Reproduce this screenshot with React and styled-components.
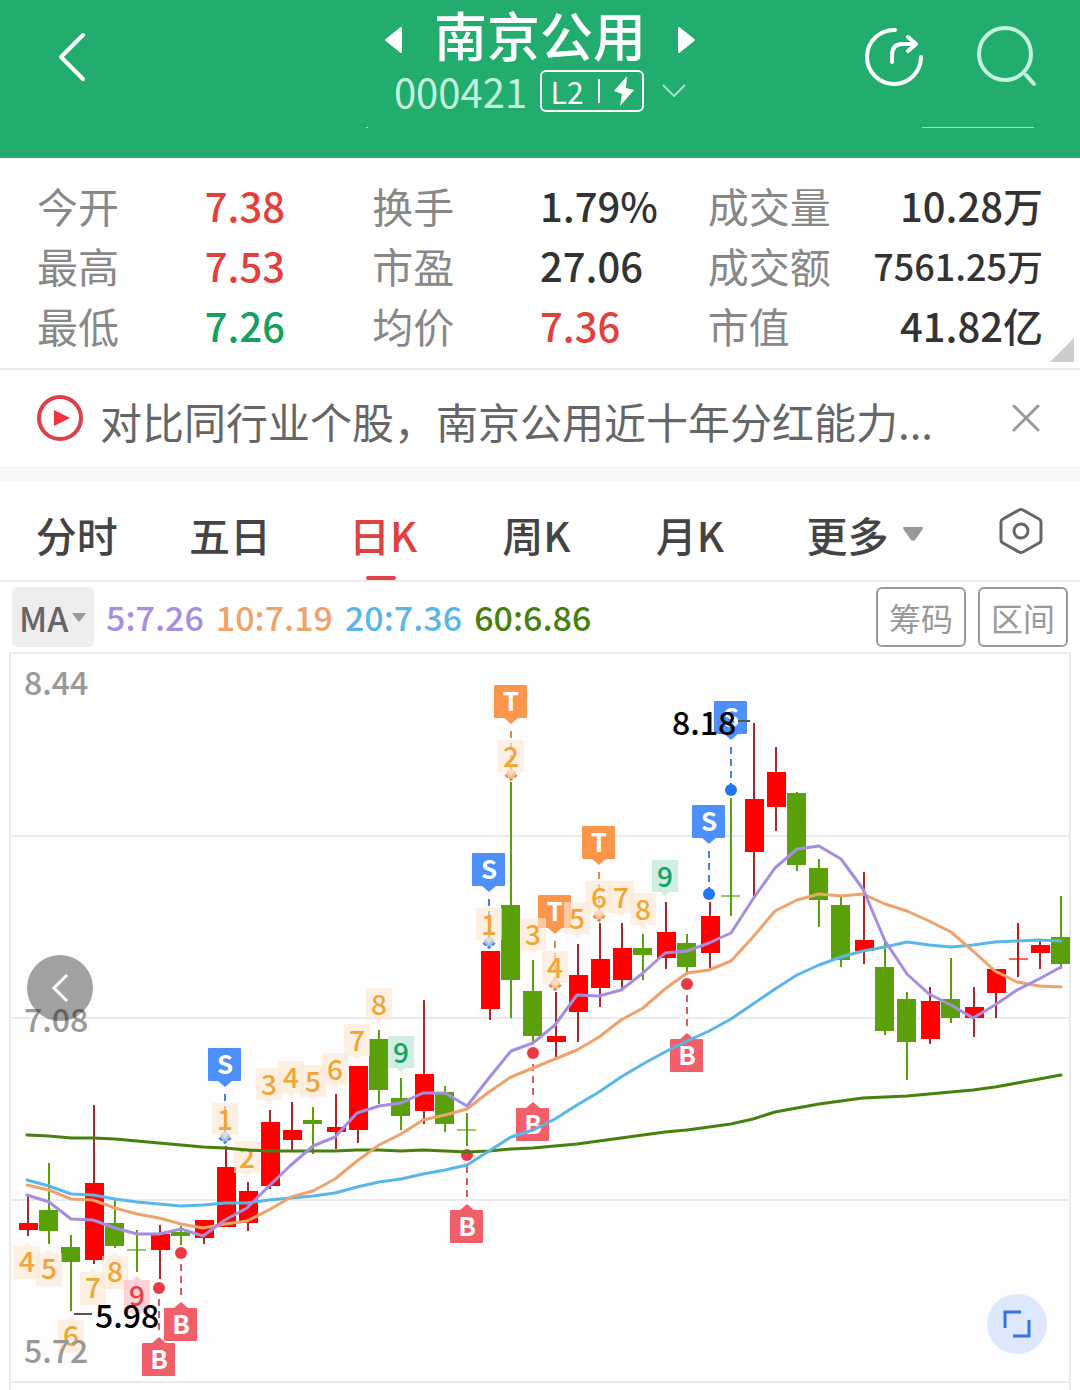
import React, { useState } from "react";
import styled, { createGlobalStyle } from "styled-components";

const FONT = '"Noto Sans CJK SC", "Noto Sans", sans-serif';

const GlobalStyle = createGlobalStyle`
  * { box-sizing: border-box; }
  body { margin: 0; background: #fff; font-family: ${FONT}; color: #333; }
  button, select { font-family: inherit; margin: 0; }
  svg { display: block; }
`;

const PlainButton = styled.button`
  display: flex;
  align-items: center;
  justify-content: center;
  padding: 0;
  border: 0;
  background: none;
  color: inherit;
  cursor: pointer;
`;

/* ---------- header ---------- */

const Header = styled.header`
  background: #22ac6e;
  color: #fff;
  padding-bottom: 30px;
`;

const HeaderBar = styled.div`
  display: grid;
  grid-template-columns: 1fr auto 1fr;
  padding: 4px 42px 0 56px;
`;

const HeaderSide = styled.div`
  display: flex;
  align-items: flex-start;
  justify-content: ${(p) => (p.$end ? "flex-end" : "flex-start")};
  gap: 52px;
  padding-top: 22px;
`;

const HeaderCenter = styled.div`
  display: flex;
  flex-direction: column;
  align-items: center;
  gap: 6px;
  margin-right: 14px;
`;

const TitleRow = styled.div`
  display: flex;
  align-items: center;
  gap: 31px;
  padding-top: 12px;
  height: 60px;
`;

const Title = styled.h1`
  margin: -12px 0 0;
  font-size: 53px;
  line-height: 60px;
  font-weight: 500;
  white-space: nowrap;
`;

const CodeRow = styled.div`
  display: flex;
  align-items: center;
  height: 42px;
`;

const Code = styled.span`
  margin-right: 13px;
  font-size: 40px;
  line-height: 42px;
  color: #c3f3dc;
`;

const LevelBadge = styled(PlainButton)`
  width: 104px;
  height: 42px;
  margin-right: 18px;
  border: 2px solid #fff;
  border-radius: 6px;
  font-size: 30px;
  line-height: 36px;
  gap: 14px;
`;

const LevelDivider = styled.span`
  width: 2px;
  height: 24px;
  background: #fff;
`;

const HeaderEdge = styled.div`
  display: flex;
  justify-content: space-between;
  height: 1px;
  margin-top: 15px;
  padding: 0 46px 0 366px;
`;

const EdgeMark = styled.span`
  width: ${(p) => p.$width}px;
  background: #8fe3bd;
`;

/* ---------- quote figures ---------- */

const Quote = styled.section`
  position: relative;
  padding: 17px 37px 13px;
  border-bottom: 2px solid #ebebeb;
`;

const QuoteGrid = styled.dl`
  display: grid;
  grid-template-columns: repeat(3, 1fr);
  margin: 0;
`;

const Figure = styled.div`
  display: grid;
  grid-template-columns: ${(p) => (p.$end ? "auto 1fr" : "1fr 1fr")};
  text-align: ${(p) => (p.$end ? "right" : "left")};
  align-items: center;
  height: 60px;
  white-space: nowrap;
`;

const FigureName = styled.dt`
  font-size: 41px;
  line-height: 60px;
  color: #888;
`;

const FigureValue = styled.dd`
  margin: 0;
  font-size: ${(p) => (p.$small ? 36 : 40)}px;
  line-height: 60px;
  font-weight: 500;
  color: ${(p) => ({ up: "#e2403c", down: "#14a05f" })[p.$tone] || "#333"};
`;

const Corner = styled.svg`
  position: absolute;
  right: 6px;
  bottom: 6px;
`;

/* ---------- news strip ---------- */

const News = styled.section`
  display: flex;
  align-items: center;
  height: 111px;
  padding: 0 40px 0 36px;
  border-bottom: 15px solid #f7f7f7;
`;

const NewsLink = styled.a`
  flex: 1;
  min-width: 0;
  margin: 6px 40px 0 16px;
  overflow: hidden;
  font-size: 42px;
  line-height: 60px;
  color: #666;
  text-decoration: none;
  white-space: nowrap;
`;

/* ---------- period tabs ---------- */

const Tabs = styled.nav`
  display: grid;
  grid-template-columns: repeat(5, 153fr) 196fr 117fr;
  height: 101px;
  border-bottom: 2px solid #ebebeb;
`;

const Tab = styled(PlainButton)`
  position: relative;
  gap: 14px;
  padding-top: 6px;
  font-size: 41px;
  line-height: 60px;
  font-weight: 500;
  color: ${(p) => (p.$active ? "#e2403f" : "#444")};

  &::after {
    content: "";
    display: ${(p) => (p.$active ? "block" : "none")};
    position: absolute;
    bottom: 0;
    left: calc(50% - 17px);
    width: 30px;
    height: 4px;
    border-radius: 2px;
    background: #e2404a;
  }
`;

/* ---------- indicator bar ---------- */

const IndicatorBar = styled.div`
  display: flex;
  align-items: center;
  gap: 12px;
  height: 70px;
  padding: 0 12px;
`;

const SelectBox = styled.label`
  display: grid;
  align-items: center;
  width: 82px;
  height: 60px;
  border-radius: 5px;
  background: #eee;

  > * { grid-area: 1 / 1; }
  > svg { justify-self: end; margin-right: 8px; pointer-events: none; }
`;

const Select = styled.select`
  width: 100%;
  height: 60px;
  padding: 0 0 0 7px;
  border: 0;
  background: none;
  appearance: none;
  font-size: 34px;
  font-weight: 500;
  color: #666;
`;

const MaValue = styled.span`
  font-size: 34px;
  line-height: 60px;
  font-weight: 500;
  color: ${(p) => p.$color};
  white-space: nowrap;
`;

const Tools = styled.div`
  display: flex;
  gap: 12px;
  margin-left: auto;
`;

const ToolButton = styled(PlainButton)`
  width: 90px;
  height: 60px;
  border: 2px solid #999;
  border-radius: 6px;
  font-size: 32px;
  color: #999;
`;

/* ---------- chart ---------- */

const ChartArea = styled.section`
  position: relative;
`;

const ChartSvg = styled.svg`
  width: 100%;
  height: auto;
  font-family: ${FONT};
  font-weight: 500;
`;

const ScrollButton = styled(PlainButton)`
  position: absolute;
  left: 27px;
  top: 303px;
  width: 66px;
  height: 66px;
  border-radius: 50%;
  background: rgba(0, 0, 0, 0.36);
`;

const ExpandButton = styled(PlainButton)`
  position: absolute;
  right: 33px;
  bottom: 36px;
  width: 60px;
  height: 60px;
  border-radius: 50%;
  background: #dde8fd;
`;

const FIGURES = [
  ["今开", "7.38", "up"], ["换手", "1.79%"], ["成交量", "10.28万"],
  ["最高", "7.53", "up"], ["市盈", "27.06"], ["成交额", "7561.25万"],
  ["最低", "7.26", "down"], ["均价", "7.36", "up"], ["市值", "41.82亿"],
];

const PERIODS = ["分时", "五日", "日K", "周K", "月K"];

const COLORS = {
  up: "#ff0000", upWick: "#a52a2a", down: "#5aa00a",
  ma5: "#a58ee0", ma10: "#eda36c", ma20: "#5bb6e8", ma60: "#47800f",
};

const STEP = 22;
const xAt = (i) => 27 + STEP * i;

// direction, high, body top, body bottom, low
const CANDLES = [
  ["u", 1196, 1223, 1230, 1236], ["d", 1163, 1210, 1231, 1244], ["d", 1235, 1247, 1262, 1311],
  ["u", 1105, 1183, 1260, 1264], ["d", 1200, 1223, 1246, 1248], ["d", 1230, 1249, 1250, 1272],
  ["u", 1225, 1234, 1250, 1279], ["d", 1226, 1232, 1236, 1245], ["u", 1220, 1220, 1238, 1244],
  ["u", 1146, 1167, 1227, 1227], ["u", 1182, 1191, 1223, 1231], ["u", 1110, 1122, 1186, 1189],
  ["u", 1102, 1130, 1140, 1151], ["d", 1107, 1120, 1124, 1154], ["u", 1094, 1127, 1132, 1149],
  ["u", 1066, 1066, 1130, 1143], ["d", 1030, 1039, 1090, 1104], ["d", 1078, 1098, 1116, 1130],
  ["u", 1000, 1074, 1111, 1124], ["d", 1086, 1092, 1124, 1132], ["d", 1113, 1129, 1130, 1146],
  ["u", 951, 951, 1009, 1020], ["d", 782, 905, 980, 1018], ["d", 960, 991, 1036, 1043],
  ["u", 992, 1036, 1042, 1060], ["u", 944, 975, 1012, 1042], ["u", 923, 959, 988, 1007],
  ["u", 923, 948, 980, 991], ["d", 934, 948, 955, 980], ["u", 902, 932, 958, 969],
  ["d", 934, 943, 967, 975], ["u", 902, 916, 953, 968], ["d", 798, 895, 896, 916],
  ["u", 723, 799, 852, 897], ["u", 747, 772, 807, 831], ["d", 792, 793, 865, 871],
  ["d", 859, 868, 900, 927], ["d", 897, 905, 960, 967], ["u", 872, 940, 951, 964],
  ["d", 942, 967, 1031, 1035], ["d", 992, 999, 1042, 1080], ["u", 987, 1001, 1039, 1044],
  ["d", 958, 999, 1018, 1023], ["u", 987, 1007, 1018, 1037], ["u", 969, 969, 993, 1018],
  ["u", 923, 958, 959, 977], ["u", 941, 945, 953, 969], ["d", 896, 937, 964, 969],
];

const MA5 = [
  1195, 1202, 1219, 1220, 1228, 1234, 1234, 1229, 1236, 1220, 1208, 1186, 1165, 1146, 1137, 1113,
  1106, 1103, 1093, 1093, 1106, 1078, 1051, 1043, 1025, 995, 996, 990, 973, 953, 951, 943, 933,
  899, 868, 849, 846, 859, 889, 941, 974, 994, 1005, 1018, 1005, 990, 979, 967,
];
const MA10 = [
  1185, 1190, 1199, 1200, 1208, 1214, 1218, 1224, 1228, 1224, 1221, 1210, 1197, 1191, 1179, 1161,
  1145, 1134, 1120, 1115, 1109, 1092, 1077, 1068, 1059, 1050, 1037, 1020, 1008, 989, 973, 970, 961,
  937, 911, 900, 894, 896, 894, 904, 911, 921, 932, 951, 971, 982, 986, 987,
];
const MA20 = [
  1180, 1186, 1194, 1195, 1199, 1202, 1204, 1206, 1205, 1203, 1203, 1200, 1198, 1196, 1193, 1187,
  1182, 1179, 1174, 1170, 1165, 1151, 1137, 1130, 1119, 1105, 1092, 1077, 1064, 1052, 1041, 1031,
  1019, 1004, 989, 975, 965, 957, 951, 947, 942, 945, 947, 945, 942, 941, 940, 941,
];
const MA60 = [
  1135, 1136, 1138, 1138, 1139, 1141, 1143, 1145, 1147, 1148, 1150, 1151, 1151, 1151, 1151, 1150,
  1150, 1151, 1150, 1151, 1152, 1151, 1149, 1148, 1146, 1144, 1141, 1138, 1135, 1132, 1130, 1127,
  1124, 1119, 1112, 1108, 1104, 1101, 1098, 1097, 1096, 1094, 1092, 1090, 1087, 1083, 1079, 1075,
];

const LINES = [
  { name: "60", data: MA60, color: COLORS.ma60 },
  { name: "20", data: MA20, color: COLORS.ma20 },
  { name: "10", data: MA10, color: COLORS.ma10 },
  { name: "5", data: MA5, color: COLORS.ma5 },
];

// letter, candle index, box top, dot centre, faint dot
const TRADES = [
  ["S", 9, 1048, 1137, true], ["S", 21, 853, 942, true], ["T", 22, 685, 774, true],
  ["T", 24, 895, 984, true], ["T", 26, 826, 915, true], ["S", 31, 805, 894, false],
  ["S", 32, 701, 790, false], ["B", 6, 1343, 1288, false], ["B", 7, 1308, 1253, false],
  ["B", 20, 1210, 1155, false], ["B", 23, 1108, 1053, false], ["B", 30, 1039, 984, false],
];

const TRADE_COLORS = {
  S: { box: "#4d8ffb", line: "#4683dc", dot: "#2276f5", faint: "#a6bfe6" },
  T: { box: "#fd964d", line: "#e08a50", dot: "#fd964d", faint: "#f9be93" },
  B: { box: "#f15f6a", line: "#df5763", dot: "#ea3a46" },
};

// digit, candle index, text centre, kind
const COUNTS = [
  [4, 0, 1262, "low"], [5, 1, 1269, "low"], [6, 2, 1336, "low"], [7, 3, 1288, "low"],
  [8, 4, 1272, "low"], [9, 5, 1296, "lowEnd"],
  [1, 9, 1120, "high"], [2, 10, 1158, "high"], [3, 11, 1085, "high"], [4, 12, 1078, "high"],
  [5, 13, 1082, "high"], [6, 14, 1070, "high"], [7, 15, 1041, "high"], [8, 16, 1005, "high"],
  [9, 17, 1053, "highEnd"],
  [1, 21, 925, "high"], [2, 22, 757, "high"], [3, 23, 935, "high"], [4, 24, 968, "high"],
  [5, 25, 919, "high"], [6, 26, 898, "high"], [7, 27, 898, "high"], [8, 28, 910, "high"],
  [9, 29, 877, "highEnd"],
];

const COUNT_COLORS = {
  low: ["#fee9d3", "#f0a534"], high: ["#fee9d3", "#f0a534"],
  lowEnd: ["#fdb9bd", "#e2404a"], highEnd: ["#b4e7d2", "#14a366"],
};

function Candle({ index, data: [dir, high, top, bottom, low] }) {
  const up = dir === "u";
  const x = xAt(index) + (up ? 1 : 0);
  const cross = bottom - top < 2;
  return (
    <g>
      <rect x={x - 1} y={high} width="2" height={low - high} fill={up ? (cross ? "#cc1414" : COLORS.upWick) : COLORS.down} />
      <rect
        x={x - 10 + (up ? 1 : 0)} y={top} width="19" height={cross ? 2 : bottom - top}
        fill={up ? COLORS.up : COLORS.down} opacity={cross ? 0.6 : 1}
      />
    </g>
  );
}

function Trade({ data: [letter, index, top, dot, faint] }) {
  const x = xAt(index);
  const c = TRADE_COLORS[letter];
  const buy = letter === "B";
  const bottom = top + 33;
  const tip = buy
    ? `M${x - 8} ${top + 1}L${x} ${top - 6}L${x + 8} ${top + 1}Z`
    : `M${x - 8} ${bottom - 1}L${x} ${bottom + 6}L${x + 8} ${bottom - 1}Z`;
  return (
    <g>
      <line
        x1={x} x2={x} y1={buy ? dot + 11 : bottom + 13} y2={buy ? top - 8 : dot - 5}
        stroke={c.line} strokeWidth="2" strokeDasharray="7 5"
      />
      <circle cx={x} cy={dot} r={faint ? 5 : 6} fill={faint ? c.faint : c.dot} />
      {faint && (
        <path d={`M${x - 6} ${dot + 1}L${x} ${dot + 6}L${x + 6} ${dot + 1}`} fill="none" stroke={c.line} strokeWidth="2" strokeDasharray="4 2" />
      )}
      <rect x={x - 17} y={top} width="33" height="33" rx="1" fill={c.box} />
      <path d={tip} fill={c.box} />
      <text x={x} y={top + 26} fontSize="26" fontWeight="700" fill="#fff" textAnchor="middle">{letter}</text>
    </g>
  );
}

function Count({ data: [digit, index, mid, kind] }) {
  const x = xAt(index);
  const [box, ink] = COUNT_COLORS[kind];
  const low = kind.startsWith("low");
  const top = low ? mid - 16 : mid - 17;
  const tip = low
    ? `L${x - 4} ${top}L${x} ${top - 4}L${x + 4} ${top}H${x + 13}V${top + 33}H${x - 13}Z`
    : `H${x + 13}V${top + 32}H${x + 4}L${x} ${top + 36}L${x - 4} ${top + 32}H${x - 13}Z`;
  return (
    <g>
      <path d={`M${x - 13} ${top}${tip}`} fill={box} opacity="0.62" />
      <text x={x} y={mid + 10} fontSize="28" fill={ink} textAnchor="middle">{digit}</text>
    </g>
  );
}

function Chart() {
  return (
    <ChartSvg viewBox="0 652 1080 738" role="img" aria-label="南京公用 日K">
      <rect x="10" y="653" width="1060" height="760" fill="#fdfdfd" stroke="#ebebeb" strokeWidth="2" />
      <path d="M10 836H1070M10 1018H1070M10 1200H1070M10 1382H1070" stroke="#ebebeb" strokeWidth="2" />
      {CANDLES.map((c, i) => <Candle key={i} index={i} data={c} />)}
      {TRADES.map((t, i) => <Trade key={i} data={t} />)}
      {COUNTS.map((c, i) => <Count key={i} data={c} />)}
      {LINES.map((l) => (
        <polyline
          key={l.name} points={l.data.map((y, i) => `${xAt(i)},${y}`).join(" ")}
          fill="none" stroke={l.color} strokeWidth="3" strokeLinejoin="round" strokeLinecap="round"
        />
      ))}
      <g fontSize="32" fill="#999">
        <text x="24" y="695">8.44</text>
        <text x="24" y="1032">7.08</text>
        <text x="24" y="1363">5.72</text>
      </g>
      <path d="M738 721H750M74 1314H92" stroke="#555" strokeWidth="2" />
      <g fontSize="32" fill="#000">
        <text x="672" y="735">8.18</text>
        <text x="95" y="1328">5.98</text>
      </g>
    </ChartSvg>
  );
}

export default function App() {
  const [period, setPeriod] = useState("日K");
  return (
    <>
      <GlobalStyle />
      <Header>
        <HeaderBar>
          <HeaderSide>
            <PlainButton aria-label="返回">
              <svg width="32" height="60" viewBox="0 0 32 60" fill="none" stroke="#fff" strokeWidth="4" strokeLinecap="round" strokeLinejoin="round">
                <path d="M27 9L5 31L27 53" />
              </svg>
            </PlainButton>
          </HeaderSide>
          <HeaderCenter>
            <TitleRow>
              <PlainButton aria-label="上一只">
                <svg width="19" height="28" viewBox="0 0 19 28" fill="#fff" stroke="#fff" strokeWidth="2" strokeLinejoin="round">
                  <path d="M17 2V26L2 14Z" />
                </svg>
              </PlainButton>
              <Title>南京公用</Title>
              <PlainButton aria-label="下一只">
                <svg width="19" height="28" viewBox="0 0 19 28" fill="#fff" stroke="#fff" strokeWidth="2" strokeLinejoin="round">
                  <path d="M2 2V26L17 14Z" />
                </svg>
              </PlainButton>
            </TitleRow>
            <CodeRow>
              <Code>000421</Code>
              <LevelBadge>
                L2
                <LevelDivider />
                <svg width="20" height="30" viewBox="0 0 20 30" fill="#fff">
                  <path d="M13 0L0 15L8 18L6 30L20 14L12 12Z" />
                </svg>
              </LevelBadge>
              <PlainButton aria-label="展开">
                <svg width="24" height="14" viewBox="0 0 24 14" fill="none" stroke="#9fe3c3" strokeWidth="2">
                  <path d="M1 1L12 12L23 1" />
                </svg>
              </PlainButton>
            </CodeRow>
          </HeaderCenter>
          <HeaderSide $end>
            <PlainButton aria-label="分享">
              <svg width="60" height="60" viewBox="0 0 60 60" fill="none" stroke="#fff" strokeWidth="4" strokeLinecap="round" strokeLinejoin="round">
                <path d="M31 4A27 27 0 1 0 57 31" />
                <path d="M28 36V29Q28 18 39 18H52M44 11L52 18L44 25" />
              </svg>
            </PlainButton>
            <PlainButton aria-label="搜索">
              <svg width="62" height="62" viewBox="0 0 62 62" fill="none" stroke="#c3f3dc" strokeWidth="4" strokeLinecap="round">
                <circle cx="29" cy="28" r="26" />
                <path d="M50 49L58 58" />
              </svg>
            </PlainButton>
          </HeaderSide>
        </HeaderBar>
        <HeaderEdge>
          <EdgeMark $width={2} />
          <EdgeMark $width={112} />
        </HeaderEdge>
      </Header>

      <Quote>
        <QuoteGrid>
          {FIGURES.map(([name, value, tone], i) => (
            <Figure key={name} $end={i % 3 === 2}>
              <FigureName>{name}</FigureName>
              <FigureValue $tone={tone} $small={value.length > 7}>{value}</FigureValue>
            </Figure>
          ))}
        </QuoteGrid>
        <Corner width="24" height="24" viewBox="0 0 24 24" fill="#ccc">
          <path d="M24 0V24H0Z" />
        </Corner>
      </Quote>

      <News>
        <svg width="48" height="48" viewBox="0 0 48 48">
          <circle cx="24" cy="24" r="21" fill="none" stroke="#dd3f4b" strokeWidth="4" />
          <path d="M18 16L34 24L18 32Z" fill="#f5333f" />
        </svg>
        <NewsLink href="#news">对比同行业个股，南京公用近十年分红能力...</NewsLink>
        <PlainButton aria-label="关闭">
          <svg width="28" height="28" viewBox="0 0 28 28" stroke="#999" strokeWidth="3" strokeLinecap="round">
            <path d="M2 2L26 26M26 2L2 26" />
          </svg>
        </PlainButton>
      </News>

      <Tabs>
        {PERIODS.map((name) => (
          <Tab key={name} $active={name === period} aria-pressed={name === period} onClick={() => setPeriod(name)}>
            {name}
          </Tab>
        ))}
        <Tab>
          更多
          <svg width="20" height="14" viewBox="0 0 20 14" fill="#999">
            <path d="M1 0H19Q21 0 19 3L12 13Q10 14 8 13L1 3Q-1 0 1 0Z" />
          </svg>
        </Tab>
        <PlainButton aria-label="设置">
          <svg width="44" height="48" viewBox="0 0 44 48" fill="none" stroke="#666" strokeWidth="3" strokeLinejoin="round">
            <path d="M20 3Q22 2 24 3L40 12Q42 13 42 15V33Q42 35 40 36L24 45Q22 46 20 45L4 36Q2 35 2 33V15Q2 13 4 12Z" />
            <circle cx="22" cy="24" r="7" />
          </svg>
        </PlainButton>
      </Tabs>

      <IndicatorBar>
        <SelectBox>
          <Select aria-label="指标" defaultValue="MA">
            <option>MA</option>
          </Select>
          <svg width="14" height="9" viewBox="0 0 14 9" fill="#999">
            <path d="M0 0H14L8 8Q7 9 6 8Z" />
          </svg>
        </SelectBox>
        <MaValue $color={COLORS.ma5}>5:7.26</MaValue>
        <MaValue $color={COLORS.ma10}>10:7.19</MaValue>
        <MaValue $color={COLORS.ma20}>20:7.36</MaValue>
        <MaValue $color={COLORS.ma60}>60:6.86</MaValue>
        <Tools>
          <ToolButton>筹码</ToolButton>
          <ToolButton>区间</ToolButton>
        </Tools>
      </IndicatorBar>

      <ChartArea>
        <Chart />
        <ScrollButton aria-label="向左">
          <svg width="20" height="30" viewBox="0 0 20 30" fill="none" stroke="#fff" strokeWidth="3">
            <path d="M17 2L4 15L17 28" />
          </svg>
        </ScrollButton>
        <ExpandButton aria-label="全屏">
          <svg width="28" height="28" viewBox="0 0 28 28" fill="none" stroke="#3274e0" strokeWidth="3">
            <path d="M2 18V2H18M26 10V26H10" />
          </svg>
        </ExpandButton>
      </ChartArea>
    </>
  );
}
